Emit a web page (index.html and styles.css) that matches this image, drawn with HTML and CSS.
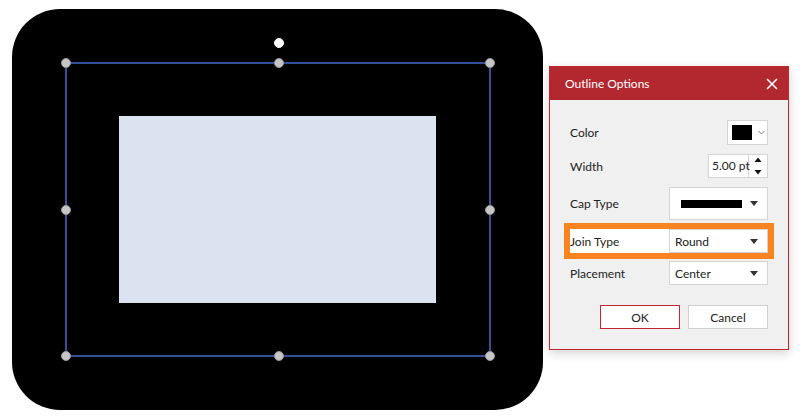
FILE: index.html
```html
<!DOCTYPE html>
<html lang="en">
<head>
  <meta charset="UTF-8" />
  <meta name="viewport" content="width=device-width, initial-scale=1.0"/>
  <title>Outline Options</title>
  <link rel="stylesheet" href="styles.css">
</head>
<body>
  <div class="stage">
    <div class="shape">
      <div class="fill"></div>

      <div class="selection">
        <span class="rotate"></span>
        <span class="grip tl"></span>
        <span class="grip tc"></span>
        <span class="grip tr"></span>
        <span class="grip ml"></span>
        <span class="grip mr"></span>
        <span class="grip bl"></span>
        <span class="grip bc"></span>
        <span class="grip br"></span>
      </div>
    </div>
  </div>

  <div class="dialog">
    <div class="dialog-header">
      <span class="dialog-title">Outline Options</span>
      <span class="close">
        <svg width="12" height="12" viewBox="0 0 12 12">
          <path d="M1 1 L11 11 M11 1 L1 11" stroke="#fff" stroke-width="1.6" fill="none"/>
        </svg>
      </span>
    </div>

    <div class="dialog-body">
      <div class="row row-color">
        <span class="label">Color</span>
        <div class="color-picker">
          <span class="swatch"></span>
          <svg class="chevron" width="7" height="5" viewBox="0 0 7 5">
            <path d="M0.5 1 L3.5 4 L6.5 1" stroke="#777" stroke-width="1" fill="none"/>
          </svg>
        </div>
      </div>

      <div class="row row-width">
        <span class="label">Width</span>
        <div class="spin">
          <span class="spin-value">5.00 pt</span>
          <span class="spin-arrows">
            <svg width="8" height="20" viewBox="0 0 8 20">
              <path d="M0.5 6 L4 1.5 L7.5 6 Z" fill="#111"/>
              <path d="M0.5 14 L4 18.5 L7.5 14 Z" fill="#111"/>
            </svg>
          </span>
        </div>
      </div>

      <div class="row row-cap">
        <span class="label">Cap Type</span>
        <div class="select select-cap">
          <span class="cap-line"></span>
          <span class="caret"></span>
        </div>
      </div>

      <div class="row row-join">
        <span class="label">Join Type</span>
        <div class="select">
          <span>Round</span>
          <span class="caret"></span>
        </div>
      </div>

      <div class="row row-place">
        <span class="label">Placement</span>
        <div class="select">
          <span>Center</span>
          <span class="caret"></span>
        </div>
      </div>

      <div class="buttons">
        <button class="btn btn-ok">OK</button>
        <button class="btn">Cancel</button>
      </div>
    </div>
  </div>
</body>
</html>
```

FILE: styles.css
```css
* { margin: 0; padding: 0; box-sizing: border-box; }

body {
  width: 800px;
  height: 420px;
  background: #ffffff;
  display: flex;
  align-items: flex-start;
  font-family: 'Lato', 'Liberation Sans', sans-serif;
  font-size: 12px;
  color: #222;
  overflow: hidden;
}

/* drawing area */

.stage {
  padding: 9px 0 0 12px;
}

.shape {
  position: relative;
  width: 531px;
  height: 401px;
  background: #000;
  border-radius: 48px;
  padding: 107px 0 0 107px;
}

.fill {
  width: 317px;
  height: 187px;
  background: #dae3ef;
}

.selection {
  position: absolute;
  left: 53px;
  top: 53px;
  width: 426px;
  height: 295px;
  border: 2px solid #33509a;
}

.grip, .rotate {
  position: absolute;
  width: 10px;
  height: 10px;
  border-radius: 50%;
  background: #c6c6c6;
  border: 1px solid #9a9a9a;
}

.rotate {
  background: #fff;
  border-color: #fff;
  left: 207px;
  top: -26px;
}

.tl { left: -6px; top: -6px; }
.tc { left: 207px; top: -6px; }
.tr { left: 418px; top: -6px; }
.ml { left: -6px; top: 141px; }
.mr { left: 418px; top: 141px; }
.bl { left: -6px; top: 287px; }
.bc { left: 207px; top: 287px; }
.br { left: 418px; top: 287px; }

/* dialog */

.dialog {
  margin: 66px 0 0 6px;
  width: 240px;
  height: 284px;
  background: #f0f0f0;
  border: 1px solid #c4262e;
  box-shadow: 0 3px 10px rgba(0, 0, 0, 0.18);
}

.dialog-header {
  height: 33px;
  background: #b3282e;
  color: #fff;
  display: flex;
  align-items: center;
  justify-content: space-between;
  padding: 0 10px 0 15px;
}

.dialog-title {
  font-size: 12px;
}

.close {
  display: flex;
}

.dialog-body {
  padding: 20px 20px 0 20px;
  display: flex;
  flex-direction: column;
}

.row {
  display: flex;
  align-items: center;
  justify-content: space-between;
}

.row-color { height: 25px; }
.row-width { height: 24px; margin-top: 9px; }
.row-cap { height: 33px; margin-top: 9px; }
.row-join { height: 24px; margin-top: 9px; background: #fff; box-shadow: 0 0 0 6px #f7841f; }
.row-place { height: 24px; margin-top: 8px; }

.color-picker {
  width: 41px;
  height: 25px;
  background: #fff;
  border: 1px solid #d4d4d4;
  display: flex;
  align-items: center;
  padding-left: 4px;
  gap: 6px;
}

.swatch {
  width: 20px;
  height: 15px;
  background: #000;
}

.spin {
  display: flex;
  height: 24px;
  background: #fff;
  border: 1px solid #d4d4d4;
}

.spin-value {
  width: 40px;
  padding-left: 3px;
  line-height: 22px;
  white-space: nowrap;
  border-right: 1px solid #d4d4d4;
}

.spin-arrows {
  width: 18px;
  display: flex;
  align-items: center;
  justify-content: center;
}

.select {
  width: 99px;
  height: 100%;
  background: #fff;
  border: 1px solid #d4d4d4;
  display: flex;
  align-items: center;
  justify-content: space-between;
  padding: 0 9px 0 5px;
}

.select-cap {
  padding-left: 11px;
}

.cap-line {
  width: 61px;
  height: 8px;
  background: #000;
}

.caret {
  width: 0;
  height: 0;
  border-left: 4px solid transparent;
  border-right: 4px solid transparent;
  border-top: 5px solid #333;
}

.buttons {
  display: flex;
  justify-content: flex-end;
  gap: 8px;
  margin-top: 20px;
}

.btn {
  width: 80px;
  height: 24px;
  background: #fff;
  border: 1px solid #d0d0d0;
  font-family: inherit;
  font-size: 12px;
  color: #222;
}

.btn-ok {
  border-color: #c4262e;
}
```
